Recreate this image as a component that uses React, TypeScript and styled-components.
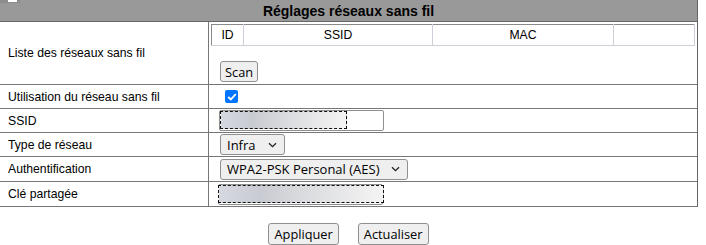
import React from "react";
import styled, { createGlobalStyle } from "styled-components";

const Global = createGlobalStyle`
  html, body { margin: 0; padding: 0; background: #fff; }
  body { font-family: "Liberation Sans", Arial, sans-serif; font-size: 12px; color: #000; }
`;

const Panel = styled.div`
  width: 697px;
  border-right: 1px solid #666;
`;

const Header = styled.div`
  position: relative;
  height: 21px;
  background: #999;
  border-bottom: 1px solid #666;
  display: flex;
  align-items: center;
  justify-content: center;
  font-weight: bold;
  font-size: 14px;
`;

const CornerIcon = styled.span`
  position: absolute;
  left: 0;
  top: 0;
  width: 20px;
  height: 3px;
  background: #8c8c8c;
  &::after {
    content: "";
    position: absolute;
    left: 8px;
    top: 0;
    width: 9px;
    height: 2px;
    background: #fff;
  }
`;

const Row = styled.div<{ $h: number }>`
  display: grid;
  grid-template-columns: 209px 1fr;
  height: ${(p) => p.$h}px;
  border-bottom: 1px solid #777;
`;

const Label = styled.div`
  display: flex;
  align-items: center;
  padding-left: 8px;
  border-right: 1px solid #777;
  font-size: 12.2px;
`;

const Value = styled.div<{ $pl?: number }>`
  display: flex;
  flex-direction: column;
  justify-content: center;
  align-items: flex-start;
  padding-left: ${(p) => p.$pl ?? 11}px;
`;

const ListCell = styled.div`
  display: flex;
  flex-direction: column;
  align-items: flex-start;
  padding: 2px 2px 0 2px;
`;

const NetTable = styled.table`
  width: 484px;
  border-collapse: collapse;
  border-top: 1px solid #8a8a8a;
  border-left: 1px solid #8a8a8a;
  border-right: 1px solid #cdd0d8;
  border-bottom: 1px solid #cdd0d8;
  th {
    height: 20px;
    padding: 0;
    font-weight: normal;
    font-size: 12.2px;
    text-align: center;
    border: 1px solid #cdd0d8;
    border-top: none;
  }
  th:first-child { border-left: none; }
`;

const NativeButton = styled.button`
  font-family: "Open Sans", "Noto Sans", sans-serif;
  font-size: 12.8px;
  line-height: 16px;
  color: #000;
  background: #efefef;
  border: 1px solid #8f8f8f;
  border-radius: 3px;
  padding: 1px 4px;
  height: 21px;
`;

const ScanButton = styled(NativeButton)`
  margin: 15px 0 0 9px;
`;

const Check = styled.span`
  width: 13px;
  height: 13px;
  margin: 0 0 0 5px;
  border-radius: 2px;
  background: #0075ff;
  display: flex;
  align-items: center;
  justify-content: center;
`;

const TextBox = styled.div<{ $w: number }>`
  position: relative;
  width: ${(p) => p.$w}px;
  height: 21px;
  border: 1px solid #8f8f8f;
  border-radius: 2px;
  box-sizing: border-box;
  background: #fff;
`;

const Redacted = styled.span<{ $w: number; $l: number }>`
  position: absolute;
  left: ${(p) => p.$l}px;
  top: 0px;
  width: ${(p) => p.$w}px;
  height: 18px;
  box-sizing: border-box;
  border: 1px dashed #111;
  background: linear-gradient(90deg, #d6d9df 0%, #c8cbd1 25%, #dcdde0 55%, #f4f4f4 100%);
`;

const Select = styled.div<{ $w: number }>`
  width: ${(p) => p.$w}px;
  height: 21px;
  box-sizing: border-box;
  border: 1px solid #8f8f8f;
  border-radius: 3px;
  background: #efefef;
  display: flex;
  align-items: center;
  justify-content: space-between;
  padding: 0 7px 0 6px;
  font-family: "Open Sans", "Noto Sans", sans-serif;
  font-size: 13px;
`;

const Chevron = () => (
  <svg width="9" height="6" viewBox="0 0 9 6">
    <path d="M1 1.2 L4.5 4.6 L8 1.2" fill="none" stroke="#222" strokeWidth="1.3" />
  </svg>
);

const Footer = styled.div`
  width: 697px;
  display: flex;
  justify-content: center;
  gap: 19px;
  padding-top: 16px;
`;

const ActionButton = styled(NativeButton)`
  height: 22px;
  padding: 1px 5px;
`;

export default function App() {
  return (
    <>
      <Global />
      <Panel>
        <Header>
          <CornerIcon />
          Réglages réseaux sans fil
        </Header>
        <Row $h={62}>
          <Label>Liste des réseaux sans fil</Label>
          <ListCell>
            <NetTable>
              <thead>
                <tr>
                  <th style={{ width: 31 }}>ID</th>
                  <th style={{ width: 188 }}>SSID</th>
                  <th style={{ width: 180 }}>MAC</th>
                  <th></th>
                </tr>
              </thead>
            </NetTable>
            <ScanButton>Scan</ScanButton>
          </ListCell>
        </Row>
        <Row $h={23}>
          <Label>Utilisation du réseau sans fil</Label>
          <Value>
            <Check>
              <svg width="10" height="8" viewBox="0 0 10 8">
                <path d="M1.2 4 L3.8 6.4 L8.8 1.2" fill="none" stroke="#fff" strokeWidth="1.8" />
              </svg>
            </Check>
          </Value>
        </Row>
        <Row $h={23}>
          <Label>SSID</Label>
          <Value $pl={10}>
            <TextBox $w={165}>
              <Redacted $l={0} $w={127} />
            </TextBox>
          </Value>
        </Row>
        <Row $h={23}>
          <Label>Type de réseau</Label>
          <Value>
            <Select $w={65}>
              Infra <Chevron />
            </Select>
          </Value>
        </Row>
        <Row $h={24}>
          <Label>Authentification</Label>
          <Value>
            <Select $w={188}>
              WPA2-PSK Personal (AES) <Chevron />
            </Select>
          </Value>
        </Row>
        <Row $h={24}>
          <Label>Clé partagée</Label>
          <Value $pl={9}>
            <TextBox $w={165}>
              <Redacted $l={-1} $w={166} />
            </TextBox>
          </Value>
        </Row>
      </Panel>
      <Footer>
        <ActionButton>Appliquer</ActionButton>
        <ActionButton>Actualiser</ActionButton>
      </Footer>
    </>
  );
}
